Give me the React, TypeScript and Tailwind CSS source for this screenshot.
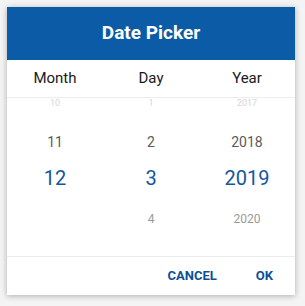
import React from 'react';

const columns = [
    { label: 'Month', items: ['10', '11', '12', ''] },
    { label: 'Day', items: ['1', '2', '3', '4'] },
    { label: 'Year', items: ['2017', '2018', '2019', '2020'] },
];

// wheel rows, top to bottom: faded, near, selected, near
const rowStyles = [
    'h-[10px] mt-0 text-[9px] text-[#d6d6d6]',
    'h-[24px] mt-[22px] text-[14px] text-[#5a5a5a]',
    'h-[28px] mt-[10px] text-[20px] text-[#1456a0]',
    'h-[20px] mt-[17px] text-[12px] text-[#9a9a9a]',
];

export default function App() {
    return (
        <div className="w-[305px] h-[306px] bg-[#f4f4f4] pt-[7px] pl-[7px]" style={{ fontFamily: 'Roboto, "Noto Sans", sans-serif' }}>
            <div className="w-[288px] h-[288px] bg-white shadow-[0_1px_6px_rgba(0,0,0,0.3)] flex flex-col">
                <div className="h-[53px] bg-[#0b5ba6] flex items-center justify-center">
                    <h1 className="text-white text-[19px] font-bold">Date Picker</h1>
                </div>

                <div className="h-[38px] grid grid-cols-3 items-center border-b border-[#ececec]">
                    {columns.map(c => (
                        <div key={c.label} className="text-center text-[15px] text-[#1a1a1a]">{c.label}</div>
                    ))}
                </div>

                <div className="h-[159px] flex flex-col overflow-hidden border-b border-[#ececec]">
                    {rowStyles.map((style, i) => (
                        <div key={i} className={`grid grid-cols-3 shrink-0 items-center leading-none ${style}`}>
                            {columns.map(c => (
                                <div key={c.label} className="text-center">{c.items[i]}</div>
                            ))}
                        </div>
                    ))}
                </div>

                <div className="flex-1 flex items-center justify-end gap-[39px] pr-[22px] pb-[1px]">
                    <button className="text-[13px] font-bold text-[#0d4f96]">CANCEL</button>
                    <button className="text-[13px] font-bold text-[#0d4f96]">OK</button>
                </div>
            </div>
        </div>
    );
}
